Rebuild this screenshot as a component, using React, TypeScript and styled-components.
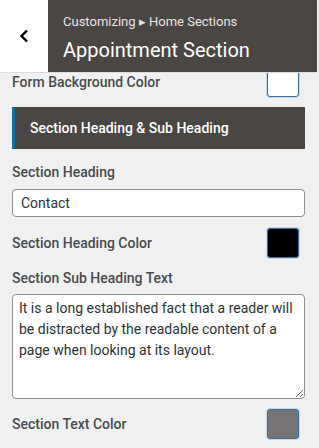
import React from "react";
import styled, { createGlobalStyle } from "styled-components";

const Global = createGlobalStyle`
  html, body { margin: 0; padding: 0; background: #f0f0f1; }
  body { font-family: Roboto, "Noto Sans", "Liberation Sans", sans-serif; width: 319px; height: 448px; overflow: hidden; }
  * { box-sizing: border-box; }
`;

const Panel = styled.div`
  width: 319px;
  height: 448px;
  overflow: hidden;
  background: #f0f0f1;
`;

const Header = styled.header`
  position: sticky;
  top: 0;
  z-index: 2;
  display: flex;
  height: 73px;
  width: 317px;
  border-bottom: 1px solid #dcdcde;
`;

const BackButton = styled.button`
  width: 48px;
  height: 72px;
  border: none;
  padding: 0;
  background: #ffffff;
  display: flex;
  align-items: center;
  justify-content: center;
  cursor: pointer;
`;

const TitleBox = styled.div`
  flex: 1;
  background: #4a4644;
  padding: 14px 0 0 15px;
  display: flex;
  flex-direction: column;
`;

const Crumb = styled.span`
  font-size: 13px;
  line-height: 16px;
  color: #e6e4e3;
`;

const Title = styled.h1`
  margin: 8px 0 0;
  font-size: 20px;
  font-weight: 400;
  line-height: 24px;
  color: #ffffff;
`;

const Content = styled.div`
  margin-top: -6px;
  padding: 0 14px 0 12px;
  display: flex;
  flex-direction: column;
`;

const ColorRow = styled.div<{ $mt: number }>`
  display: flex;
  align-items: center;
  justify-content: space-between;
  height: 30px;
  margin-top: ${(p) => p.$mt}px;
`;

const Label = styled.div<{ $mt?: number }>`
  font-size: 14px;
  font-weight: 500;
  line-height: 18px;
  color: #474b50;
  margin-top: ${(p) => p.$mt ?? 0}px;
`;

const Swatch = styled.button<{ $color: string }>`
  width: 32px;
  height: 30px;
  margin-right: 6px;
  padding: 0;
  border-radius: 3px;
  border: 1px solid #3f6f98;
  box-shadow: 0 0 0 1px rgba(114, 174, 230, 0.35);
  background: ${(p) => p.$color};
`;

const SectionBar = styled.div`
  margin-top: 10px;
  height: 42px;
  background: #4a4644;
  border-left: 3px solid #0a73aa;
  display: flex;
  align-items: center;
  padding-left: 15px;
  font-size: 14px;
  font-weight: 500;
  color: #ffffff;
`;

const TextInput = styled.input`
  margin-top: 8px;
  height: 28px;
  width: 100%;
  border: 1px solid #8c8f94;
  border-radius: 4px;
  background: #ffffff;
  padding: 0 8px;
  font-family: inherit;
  font-size: 14px;
  color: #2c3338;
  outline: none;
`;

const TextArea = styled.textarea`
  margin-top: 7px;
  height: 105px;
  width: 100%;
  border: 1px solid #8c8f94;
  border-radius: 4px;
  background: #ffffff;
  padding: 3px 6px;
  font-family: inherit;
  font-size: 14px;
  line-height: 21px;
  color: #2c3338;
  resize: vertical;
  outline: none;
  display: block;
`;

export default function App() {
  return (
    <Panel>
      <Global />
      <Header>
        <BackButton aria-label="Back">
          <svg width="10" height="14" viewBox="0 0 10 14">
            <polyline points="8,1.5 2.5,7 8,12.5" fill="none" stroke="#000" strokeWidth="2.4" />
          </svg>
        </BackButton>
        <TitleBox>
          <Crumb>Customizing ▸ Home Sections</Crumb>
          <Title>Appointment Section</Title>
        </TitleBox>
      </Header>
      <Content>
        <ColorRow $mt={0}>
          <Label>Form Background Color</Label>
          <Swatch $color="#ffffff" />
        </ColorRow>
        <SectionBar>Section Heading &amp; Sub Heading</SectionBar>
        <Label $mt={14}>Section Heading</Label>
        <TextInput defaultValue="Contact" />
        <ColorRow $mt={11}>
          <Label>Section Heading Color</Label>
          <Swatch $color="#000000" />
        </ColorRow>
        <Label $mt={11}>Section Sub Heading Text</Label>
        <TextArea defaultValue="It is a long established fact that a reader will be distracted by the readable content of a page when looking at its layout." />
        <ColorRow $mt={10}>
          <Label>Section Text Color</Label>
          <Swatch $color="#767374" />
        </ColorRow>
      </Content>
    </Panel>
  );
}
